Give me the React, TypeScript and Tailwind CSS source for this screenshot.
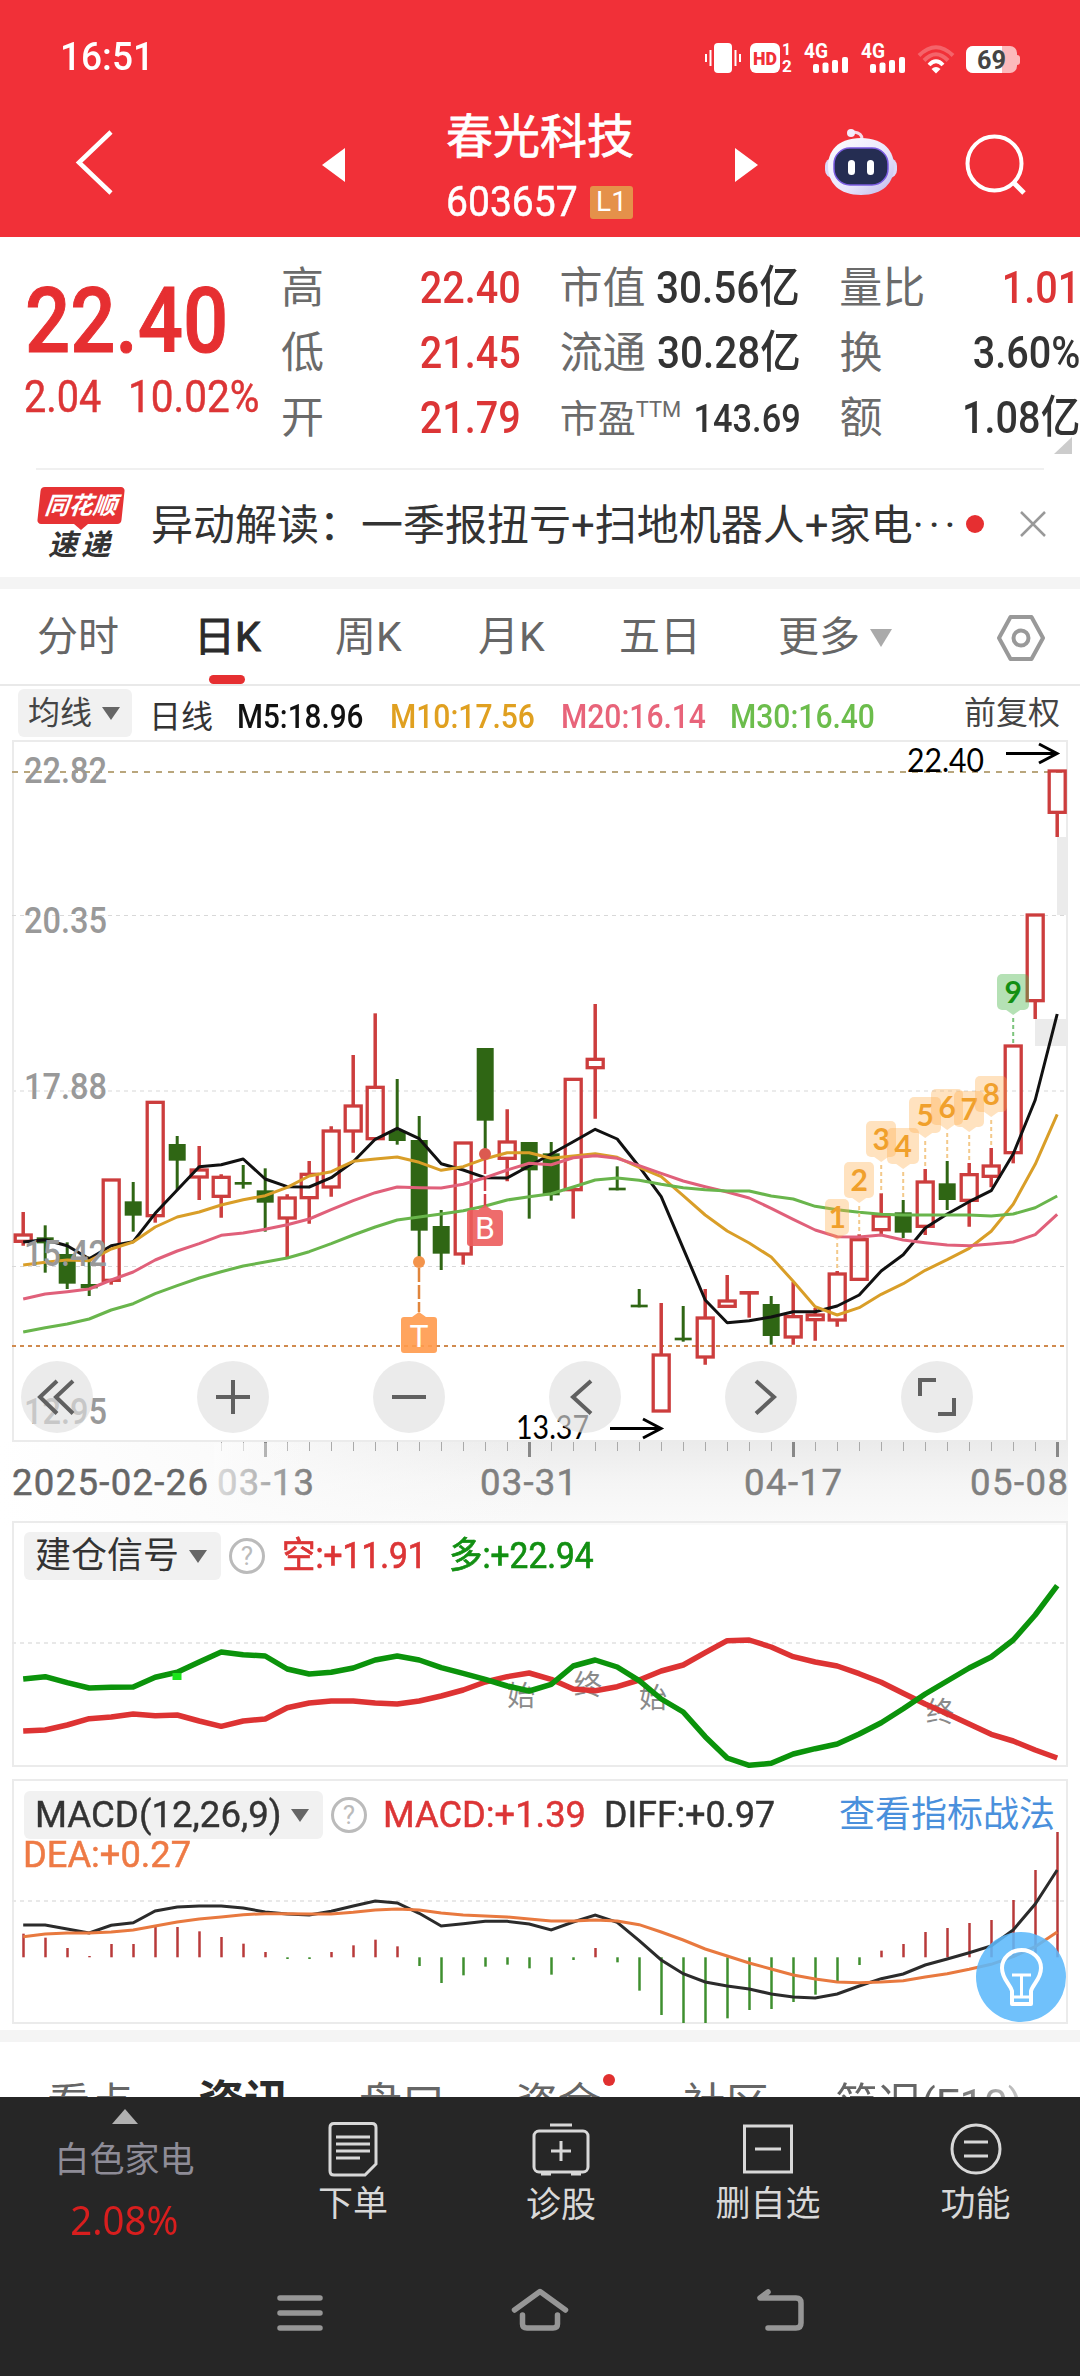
import React from 'react'

const STEP = 22
const X0 = 23.2
const px = (i: number) => X0 + i * STEP

// [high, bodyTop, bodyBottom, low, up ? 1 : 0], thirds of a pixel below y = 1080
const candles: number[][] = [
  [396, 465, 484, 497, 1], [436, 472, 490, 578, 0], [487, 522, 611, 627, 0], [530, 612, 625, 648, 0],
  [300, 300, 601, 614, 1], [306, 364, 407, 455, 0], [67, 67, 407, 428, 1], [168, 192, 242, 330, 0],
  [198, 270, 291, 360, 1], [283, 292, 349, 413, 1], [255, 306, 314, 326, 0], [265, 331, 368, 455, 0],
  [343, 354, 414, 537, 1], [243, 283, 353, 431, 1], [139, 153, 321, 350, 1], [-75, 78, 153, 218, 1],
  [-200, 22, 176, 176, 1], [-3, 153, 183, 194, 0], [108, 180, 452, 545, 0], [390, 438, 521, 570, 0],
  [189, 189, 522, 554, 1], [-96, -96, 122, 222, 0], [88, 186, 235, 304, 1], [186, 186, 271, 416, 0],
  [186, 220, 346, 362, 0], [-2, -2, 329, 416, 1], [-228, -62, -37, 116, 1], [259, 323, 331, 331, 0],
  [627, 674, 682, 682, 0], [669, 825, 993, 993, 1], [678, 773, 781, 785, 0], [627, 714, 831, 854, 1],
  [585, 663, 679, 679, 1], [638, 638, 639, 713, 1], [648, 672, 768, 794, 0], [606, 710, 771, 794, 1],
  [684, 705, 719, 782, 1], [573, 582, 720, 740, 1], [463, 479, 598, 602, 1], [340, 408, 449, 465, 1],
  [360, 397, 458, 474, 0], [267, 306, 439, 465, 1], [243, 310, 360, 390, 0], [249, 284, 361, 440, 1],
  [204, 258, 289, 322, 1], [-102, -102, 218, 250, 1], [-495, -495, -238, -183, 1], [-927, -927, -803, -729, 1],
]

const m5 = [486, 479, 497, 536, 497, 485, 400, 330, 260, 254, 237, 297, 320, 321, 293, 245, 178, 145, 176, 251, 270, 293, 294, 258, 222, 185, 148, 177, 260, 350, 505, 660, 728, 722, 711, 695, 695, 678, 645, 573, 524, 444, 402, 365, 332, 222, 60, -198]
const m10 = [555, 547, 540, 542, 507, 486, 441, 411, 396, 375, 359, 347, 322, 288, 275, 244, 237, 231, 247, 271, 260, 236, 218, 218, 235, 228, 221, 232, 262, 290, 347, 405, 453, 489, 531, 604, 680, 705, 683, 643, 611, 571, 539, 505, 454, 373, 253, 103]
const m20 = [657, 642, 635, 627, 600, 576, 540, 513, 491, 466, 459, 448, 434, 417, 389, 362, 338, 321, 323, 324, 313, 293, 270, 250, 254, 233, 227, 235, 257, 280, 303, 320, 336, 354, 385, 418, 450, 470, 471, 465, 480, 488, 495, 497, 492, 486, 464, 403]
const m30 = [756, 743, 732, 717, 690, 671, 641, 617, 594, 575, 558, 546, 534, 515, 491, 465, 441, 420, 411, 402, 392, 378, 360, 350, 341, 321, 300, 294, 301, 313, 323, 329, 333, 333, 348, 357, 379, 389, 397, 403, 405, 405, 405, 405, 408, 402, 383, 348]

const longLine = [507, 500, 518, 534, 532, 531, 502, 487, 456, 426, 434, 438, 477, 492, 487, 474, 450, 438, 450, 473, 490, 508, 528, 543, 523, 468, 450, 471, 512, 567, 606, 680, 744, 766, 760, 732, 716, 702, 672, 638, 596, 552, 513, 474, 441, 390, 315, 227]
const shortLine = [663, 660, 645, 626, 621, 612, 617, 615, 633, 649, 633, 627, 593, 579, 573, 573, 579, 582, 573, 558, 540, 516, 500, 489, 508, 537, 542, 530, 510, 483, 465, 428, 392, 390, 411, 440, 456, 468, 491, 517, 550, 582, 611, 642, 673, 693, 720, 744]

const macdBars = [491, 503, 534, 558, 522, 522, 470, 471, 484, 501, 521, 546, 567, 567, 546, 526, 509, 529, 588, 639, 616, 590, 584, 595, 614, 570, 534, 577, 662, 735, 759, 759, 745, 720, 717, 696, 674, 634, 585, 542, 522, 486, 474, 459, 450, 390, 300, 186]
const diff = [465, 465, 477, 489, 466, 458, 423, 411, 408, 408, 414, 426, 432, 435, 424, 408, 393, 399, 430, 468, 461, 454, 454, 462, 480, 456, 435, 457, 512, 570, 611, 636, 648, 657, 672, 681, 684, 672, 648, 626, 612, 585, 567, 548, 528, 480, 402, 300]
const dea = [500, 492, 489, 489, 486, 480, 468, 456, 447, 441, 434, 431, 431, 432, 432, 427, 420, 417, 420, 429, 435, 438, 441, 447, 453, 453, 450, 453, 464, 486, 510, 537, 558, 579, 597, 615, 627, 636, 638, 636, 632, 621, 611, 598, 583, 560, 530, 486]

const line = (data: number[], base: number) =>
  data.map((v, i) => `${px(i).toFixed(1)},${(base + v / 3).toFixed(1)}`).join(' ')

// label, x, width, top, candle index
const badges: [string, number, number, number, number][] = [
  ['1', 825, 24, 1199, 37], ['2', 844, 30, 1162, 38], ['3', 866, 30, 1121, 39], ['4', 887, 32, 1128, 40],
  ['5', 909, 32, 1097, 41], ['6', 931, 32, 1089, 42], ['7', 954, 30, 1091, 43], ['8', 975, 32, 1076, 44],
  ['9', 997, 32, 974, 45],
]

const priceLabels: [string, number][] = [['22.82', 783], ['20.35', 933], ['17.88', 1099], ['15.42', 1266], ['12.95', 1424]]

function StatusBar() {
  return (
    <div className="flex h-[96px] items-start justify-between pl-[60px]">
      <span className="mt-[34px] origin-left scale-x-[0.95] text-[39px] leading-[46px] font-medium">16:51</span>
      <svg className="mt-[30px] w-[380px] shrink-0" height="50" viewBox="700 30 380 50" fill="#fff">
        <rect x="714" y="43" width="18" height="30" rx="4" />
        <path d="M710.5 50v16M706 54v8M735.5 50v16M740 54v8" stroke="#fff" strokeWidth="2" />
        <rect x="750" y="43" width="30" height="30" rx="6" />
        <text x="753" y="65" fontSize="19" fontWeight="900" fill="#f13038" textLength="24" lengthAdjust="spacingAndGlyphs">HD</text>
        <text x="782" y="55" fontSize="16" fontWeight="700">1</text>
        <text x="782" y="72" fontSize="17" fontWeight="700">2</text>
        {[0, 57].map((dx) => (
          <g key={dx} transform={`translate(${dx} 0)`}>
            <text x="804" y="57.500" fontSize="20" fontWeight="700" textLength="24" lengthAdjust="spacingAndGlyphs">4G</text>
            <rect x="813" y="64" width="6" height="9" rx="2" />
            <rect x="822.5" y="62.5" width="6" height="10.5" rx="2" />
            <rect x="832" y="60" width="6" height="13" rx="2" />
            <rect x="842" y="57" width="6" height="16" rx="2" />
          </g>
        ))}
        <g fill="none" stroke="#fff" strokeWidth="4">
          <path d="M919 55.5Q936 39 953 55.5" opacity="0.25" />
          <path d="M924 60.5Q936 48 948 60.5" opacity="0.25" />
          <path d="M929 65Q936 57.500 943 65" />
        </g>
        <path d="M931.500 69Q936 65 940.500 69L936 73.500z" />
        <rect x="966" y="46" width="51" height="27" rx="7" fill="#fcb9bb" />
        <path d="M973 46h29v27h-29a7 7 0 0 1-7-7V53a7 7 0 0 1 7-7z" />
        <path d="M1017 55q3 0 3 3v4q0 3-3 3z" fill="#fcb9bb" />
        <text x="977" y="69" fontSize="25" fontWeight="700" fill="#444" textLength="29" lengthAdjust="spacingAndGlyphs">69</text>
      </svg>
    </div>
  )
}

function Robot() {
  return (
    <svg width="74" height="70" viewBox="824 128 74 70">
      <defs>
        <linearGradient id="shell" x1="0" y1="0" x2="1" y2="1">
          <stop offset="0" stopColor="#fff" />
          <stop offset="0.6" stopColor="#e8e4fb" />
          <stop offset="1" stopColor="#bcb6ea" />
        </linearGradient>
      </defs>
      <path d="M862 139q0-6-8-7" fill="none" stroke="#f6d9e6" strokeWidth="3" />
      <circle cx="851" cy="133" r="4" fill="#f4ecfb" />
      <rect x="825" y="158" width="72" height="20" rx="8" fill="#dcd8f7" />
      <path d="M861 138c24 0 33 14 33 28 0 17-11 29-33 29s-33-12-33-29c0-14 9-28 33-28z" fill="url(#shell)" />
      <rect x="834" y="148" width="54" height="37" rx="16" fill="#252d52" stroke="#7a5be0" strokeWidth="1.500" />
      <rect x="848" y="160" width="7" height="15" rx="3.500" fill="#fff" />
      <rect x="867" y="160" width="7" height="15" rx="3.500" fill="#fff" />
    </svg>
  )
}

function Header() {
  return (
    <header className="h-[237px] bg-[#f13038] text-white">
      <StatusBar />
      <div className="flex h-[141px] items-start">
        <svg className="mt-[30px] ml-[70px]" width="50" height="70" viewBox="70 126 50 70" fill="none" stroke="#fff" strokeWidth="4.500">
          <path d="M111 132L79 162.500L111 193" />
        </svg>
        <svg className="mt-[50px] ml-[200px]" width="30" height="38" viewBox="320 146 30 38" fill="#fff">
          <path d="M322 165L345 148V182z" />
        </svg>
        <div className="ml-[96px] flex w-[190px] flex-col">
          <h1 className="mt-[11px] text-[47px] leading-[60px] whitespace-nowrap [-webkit-text-stroke:0.8px]">春光科技</h1>
          <div className="mt-[10px] flex items-center">
            <span className="w-[144px] origin-left scale-x-[0.93] text-[42px] leading-[50px] [-webkit-text-stroke:0.5px]">603657</span>
            <span className="flex h-[33px] w-[43px] items-center justify-center rounded-[3px] bg-[#e5914a] text-[28px] leading-none">L1</span>
          </div>
        </div>
        <svg className="mt-[50px] ml-[96px]" width="30" height="38" viewBox="732 146 30 38" fill="#fff">
          <path d="M758 165L735 148V182z" />
        </svg>
        <div className="mt-8 ml-[62px]"><Robot /></div>
        <svg className="mt-[34px] ml-[64px]" width="68" height="68" viewBox="962 130 68 68" fill="none" stroke="#fff" strokeWidth="4">
          <circle cx="994.500" cy="163.500" r="27" />
          <path d="M1014 183L1024 193" strokeWidth="5" />
        </svg>
      </div>
    </header>
  )
}

const red = 'text-[#dc3536]'
const rows = [
  ['高', '22.40', '市值', '30.56亿', '量比', '1.01'],
  ['低', '21.45', '流通', '30.28亿', '换', '3.60%'],
  ['开', '21.79', '市盈', '143.69', '额', '1.08亿'],
]

function Quote() {
  return (
    <section className="relative flex h-[231px] pt-[18px]">
      <div className="w-[281px] pl-[26px] text-[#e62f31]">
        <div className="mt-[14px] ml-[-1px] origin-left scale-x-[0.885] text-[90px] leading-[106px] font-medium [-webkit-text-stroke:1px]">22.40</div>
        <div className={`mt-[-6px] ml-[-2px] flex text-[45px] leading-[56px] ${red} [-webkit-text-stroke:0.5px]`}>
          <span className="w-[104px] origin-left scale-x-[0.88]">2.04</span>
          <span className="origin-left scale-x-[0.9]">10.02%</span>
        </div>
      </div>
      <div className="flex w-[799px] flex-col">
        {rows.map((r, i) => (
          <div key={r[0]} className="flex h-[65px] items-center text-[43px] leading-[60px] whitespace-nowrap text-[#6b6b6b]">
            <span className="w-[120px]">{r[0]}</span>
            <span className={`w-[120px] text-right ${red}`}>
              <b className="inline-block origin-right scale-x-[0.88] text-[45px] font-medium">{r[1]}</b>
            </span>
            <span className="w-[92px] pl-[39px]">
              {i === 2 ? <span className="text-[38px]">{r[2]}<sup className="top-[-15px] text-[22px]">TTM</sup></span> : r[2]}
            </span>
            <span className="w-[188px] text-right text-[#333]">
              <b className={i === 2 ? 'inline-block origin-right scale-x-[0.88] text-[39px] font-medium' : 'inline-block origin-right scale-x-[0.9] text-[45px] font-medium'}>{r[3]}</b>
            </span>
            <span className="w-[119px] pl-[39px]">{r[4]}</span>
            <span className={i === 0 ? 'w-[161px] text-right text-[#dc3536]' : 'w-[161px] text-right text-[#333]'}>
              <b className="inline-block origin-right scale-x-[0.88] text-[45px] font-medium">{r[5]}</b>
            </span>
          </div>
        ))}
      </div>
      <svg className="absolute right-2 bottom-[14px]" width="18" height="17" fill="#ccc"><path d="M18 0V17H0z" /></svg>
    </section>
  )
}

function NewsBar() {
  return (
    <section className="flex h-[109px] flex-col">
      <div className="mx-9 h-[2px] shrink-0 bg-[#f0f0f0]" />
      <div className="flex h-[107px] items-center pl-[36px]">
        <div className="flex w-[90px] flex-col items-center font-bold italic">
          <div className="flex h-[37px] w-[84px] -skew-x-6 items-center justify-center rounded bg-[#e63234] text-[24px] leading-none whitespace-nowrap text-white">同花顺</div>
          <svg width="14" height="6" fill="#e63234"><path d="M0 0H14L7 6z" /></svg>
          <div className="text-[29px] leading-[30px] tracking-[4px] text-[#333]">速递</div>
        </div>
        <p className="mt-[3px] ml-[25px] w-[815px] text-[42px] whitespace-nowrap text-[#333]">
          异动解读：一季报扭亏+扫地机器人+家电<span className="tracking-[5px]">···</span>
        </p>
        <span className="size-[18px] shrink-0 rounded-full bg-[#e62f31]" />
        <svg className="ml-[36px] shrink-0" width="26" height="26" stroke="#999" strokeWidth="2.500"><path d="M1 1L25 25M25 1L1 25" /></svg>
      </div>
    </section>
  )
}

function PeriodTabs() {
  return (
    <nav className="flex h-[97px] items-center border-b-2 border-[#e9e9e9] pt-[3px] text-[41px] text-[#666]">
      <span className="ml-[37px] w-[157px]">分时</span>
      <span className="relative w-[141px] text-[#2b2b2b] [-webkit-text-stroke:1px]">
        日K
        <i className="absolute top-[68px] left-[15px] h-[9px] w-9 rounded-full bg-[#e62f31]" />
      </span>
      <span className="w-[143px]">周K</span>
      <span className="w-[141px]">月K</span>
      <span className="w-[159px]">五日</span>
      <span className="w-[91px]">更多</span>
      <svg width="24" height="20" fill="#aaa"><path d="M1 1H23L12 19z" /></svg>
      <svg className="ml-[102px]" width="52" height="50" viewBox="0 0 52 50" fill="none" stroke="#999" strokeWidth="4">
        <path d="M15.500 4H36.500L48 25L36.500 46H15.500L4 25z" strokeLinejoin="round" />
        <circle cx="26" cy="25" r="7.500" />
      </svg>
    </nav>
  )
}

function Caret() {
  return <svg width="18" height="13" fill="#666"><path d="M0 0H18L9 13z" /></svg>
}

function Help() {
  return (
    <span className="ml-2 flex size-9 shrink-0 items-center justify-center rounded-full border-[3px] border-[#bbb] text-[26px] leading-none text-[#bbb]">?</span>
  )
}

function AverageBar() {
  return (
    <div className="flex h-[54px] items-start pl-[18px] text-[33px] whitespace-nowrap">
      <div className="mt-[3px] flex h-12 w-[114px] items-center justify-between rounded-md bg-[#f1f1f1] pr-3 pl-[10px] text-[32px] text-[#444]">
        均线<Caret />
      </div>
      <div className="mt-[7px] flex h-12 items-center">
        <span className="ml-[17px] w-[88px] text-[32px] text-[#333]">日线</span>
        <span className="w-[153px] origin-left scale-x-[0.9] font-medium text-[#111]">M5:18.96</span>
        <span className="w-[171px] origin-left scale-x-[0.91] font-medium text-[#e0a020]">M10:17.56</span>
        <span className="w-[169px] origin-left scale-x-[0.91] font-medium text-[#e8647a]">M20:16.14</span>
        <span className="w-[234px] origin-left scale-x-[0.91] font-medium text-[#6cbd4c]">M30:16.40</span>
      </div>
      <span className="mt-[3px] text-[32px] leading-[48px] text-[#444]">前复权</span>
    </div>
  )
}

function KLine() {
  const y = (v: number) => 1080 + v / 3
  return (
    <svg width="1080" height="785" viewBox="0 740 1080 785" fill="none">
      <defs>
        <linearGradient id="axisY" x2="0" y2="1"><stop offset="0" stopColor="#ebebeb" /><stop offset="0.5" stopColor="#f5f5f5" /><stop offset="1" stopColor="#fafafa" /></linearGradient>
        <linearGradient id="axisFade"><stop offset="0" stopColor="#fff" /><stop offset="0.4" stopColor="#fcfcfc" stopOpacity="0.9" /><stop offset="1" stopColor="#fafafa" stopOpacity="0" /></linearGradient>
        <linearGradient id="fade"><stop offset="0" stopColor="#fcfcfc" stopOpacity="0.75" /><stop offset="0.4" stopColor="#fafafa" stopOpacity="0.5" /><stop offset="1" stopColor="#fafafa" stopOpacity="0" /></linearGradient>
      </defs>
      <rect x="0" y="1442" width="1068" height="83" fill="url(#axisY)" />
      <rect x="0" y="1442" width="560" height="83" fill="url(#axisFade)" />
      <path d="M13 1441V741H1067V1441z" stroke="#ebebeb" strokeWidth="2" />

      <path d="M12 772H1066" stroke="#b9a67c" strokeWidth="2" strokeDasharray="6 6" />
      <path d="M12 915.500H1066M12 1266.500H1066" stroke="#d8d8d8" strokeWidth="1" strokeDasharray="4 4" />
      <path d="M12 1091H1066" stroke="#ebebeb" strokeWidth="2" strokeDasharray="4 4" />
      <path d="M12 1346H1066" stroke="#d08a4e" strokeWidth="2" strokeDasharray="4 4" />
      <path d="M1057 837H1068V915H1057zM1035 1019H1068V1046H1035z" fill="#ebebeb" />

      {candles.map(([h, t, b, l, up], i) => {
        const x = px(i)
        return up ? (
          <g key={i} stroke="#cc3d3d">
            <path d={`M${x} ${y(h)}V${y(t)}M${x} ${y(b)}V${y(l)}`} strokeWidth="3.500" />
            <rect x={x - 8} y={y(t)} width="16" height={y(b) - y(t)} strokeWidth="3.300" />
          </g>
        ) : (
          <g key={i} fill="#2f6614">
            <rect x={x - 1.5} y={y(h)} width="3" height={y(l) - y(h)} />
            <rect x={x - 8.5} y={y(t)} width="17" height={y(b) - y(t)} />
          </g>
        )
      })}

      <g strokeWidth="3" strokeLinejoin="round">
        <polyline points={line(m5, 1080)} stroke="#111" />
        <polyline points={line(m10, 1080)} stroke="#d99e28" />
        <polyline points={line(m20, 1080)} stroke="#e0607a" />
        <polyline points={line(m30, 1080)} stroke="#69b54c" />
      </g>

      <g fontFamily="Roboto" fontSize="36.500" fontWeight="500" fill="#999">
        {priceLabels.map(([t, ly]) => (
          <text key={t} x="24" y={ly} textLength="83" lengthAdjust="spacingAndGlyphs">{t}</text>
        ))}
      </g>

      <circle cx="419" cy="1262" r="6" fill="#f3944c" />
      <path d="M419 1268V1312" stroke="#e0853c" strokeWidth="2.500" strokeDasharray="14 3" />
      <path d="M404 1317H412L419 1312L426 1317H434Q437 1317 437 1320V1350Q437 1353 434 1353H404Q401 1353 401 1350V1320Q401 1317 404 1317z" fill="#ff9a4c" opacity="0.9" />
      <text x="419" y="1347" fontSize="32" fontFamily="Roboto" fill="#fff" textAnchor="middle">T</text>
      <circle cx="485" cy="1154" r="6" fill="#dc5a50" />
      <path d="M485 1160V1206" stroke="#d23c46" strokeWidth="2.500" strokeDasharray="14 3" />
      <path d="M470 1210H478L485 1205L492 1210H500Q503 1210 503 1213V1243Q503 1246 500 1246H470Q467 1246 467 1243V1213Q467 1210 470 1210z" fill="#ec5c5c" opacity="0.9" />
      <text x="485" y="1239" fontSize="32" fontFamily="Roboto" fill="#fff" textAnchor="middle">B</text>

      {badges.map(([t, bx, w, by, i]) => {
        const green = t === '9'
        return (
          <g key={t}>
            <path d={`M${px(i)} ${by + 44}V${y(candles[i][0])}`} stroke={green ? '#7cc47c' : '#f3c98a'} strokeWidth="2" strokeDasharray="4 3" />
            <rect x={bx} y={by} width={w} height="36" rx="5" fill={green ? '#4fb84f' : '#ffb04e'} opacity={green ? 0.42 : 0.36} />
            <path d={`M${px(i) - 7} ${by + 36}h14l-7 5z`} fill={green ? '#4fb84f' : '#ffb04e'} opacity={green ? 0.42 : 0.36} />
            <text x={px(i)} y={by + 28.5} fontFamily="Lato" fontWeight="700" fontSize="30" fill={green ? '#128f12' : '#f0a02c'} textAnchor="middle">{t}</text>
          </g>
        )
      })}

      <g fontFamily="Lato" fontSize="32" fill="#000">
        <text x="907" y="772" textLength="77" lengthAdjust="spacingAndGlyphs">22.40</text>
        <text x="516" y="1439" textLength="73" lengthAdjust="spacingAndGlyphs">13.37</text>
      </g>
      <path d="M1006 753.500H1056M1039 744L1057 753.500L1039 763M610 1428.500H660M643 1419L661 1428.500L643 1438" stroke="#000" strokeWidth="3" />

      {candles.map((_, i) => {
        if (i < 9) return null
        const major = (i + 1) % 12 === 0
        return <path key={i} d={`M${px(i) + 0.3} 1442V${major ? 1457 : 1451}`} stroke={major ? '#888' : '#aaa'} strokeWidth={major ? 3 : 1} />
      })}
      <g fontFamily="Roboto" fontSize="36.500" fill="#808080" stroke="#808080" strokeWidth="0.500">
        <text x="217" y="1495" textLength="97">03-13</text>
        <text x="480" y="1495" textLength="97">03-31</text>
        <text x="744" y="1495" textLength="98">04-17</text>
        <text x="970" y="1495" textLength="98">05-08</text>
        <rect x="214" y="1443" width="96" height="60" fill="url(#fade)" stroke="none" />
        <text x="12" y="1495" textLength="196" fill="#666" stroke="#666">2025-02-26</text>
      </g>
    </svg>
  )
}

const controls = [
  'M16 -16L-1 0L16 16.500M0 -16L-17 0L0 16.500',
  'M-17 0H17M0 -17V17',
  'M-17 0H17',
  'M6 -16L-12 0L6 16.500',
  'M-5 -16L13 0L-5 16.500',
  'M-17 -1V-17H-1M1 17H17V1',
]

function ChartPanel() {
  return (
    <section className="relative h-[781px]">
      <KLine />
      <div className="absolute top-[621px] left-[21px] flex gap-[104px]">
        {controls.map((d) => (
          <button key={d} className="flex size-[72px] items-center justify-center rounded-full bg-[#e0e0e0]/65">
            <svg width="40" height="40" viewBox="-20 -20 40 40" fill="none" stroke="#606060" strokeWidth="4"><path d={d} /></svg>
          </button>
        ))}
      </div>
    </section>
  )
}

function SignalPanel() {
  return (
    <section className="relative mx-3 h-[246px] border-2 border-[#ebebeb]">
      <div className="relative flex items-center pt-[9px] pl-[10px] text-[36px] leading-[48px] whitespace-nowrap">
        <div className="flex h-12 w-[197px] items-center justify-between rounded-md bg-[#f1f1f1] pr-[14px] pl-[11px] text-[#333]">
          <span>建仓信号</span><Caret />
        </div>
        <Help />
        <span className="ml-[17px] w-[167px] origin-left scale-x-[0.93] text-[#dc3536] [-webkit-text-stroke:0.7px]">空:+11.91</span>
        <span className="origin-left scale-x-[0.93] text-[#128f12] [-webkit-text-stroke:0.7px]">多:+22.94</span>
      </div>
      <svg className="absolute -top-[3px] -left-[14px]" width="1080" height="250" viewBox="0 1520 1080 250" fill="none">
        <path d="M12 1643H1066" stroke="#e8e8e8" strokeWidth="2" strokeDasharray="4 4" />
        <g fontFamily="'Noto Sans CJK SC', sans-serif" fontSize="28" fill="#8a8a8a">
          <text x="507" y="1706">始</text>
          <text x="574" y="1695">终</text>
          <text x="639" y="1708">始</text>
          <text x="926" y="1722">终</text>
        </g>
        <g strokeWidth="5.500" strokeLinejoin="round">
          <polyline points={line(shortLine, 1510)} stroke="#dd3333" />
          <polyline points={line(longLine, 1510)} stroke="#0b930b" />
        </g>
        <rect x="172.500" y="1673" width="9" height="7" fill="#1be51b" />
      </svg>
    </section>
  )
}

function MacdPanel() {
  return (
    <section className="relative mx-3 mt-3 h-[245px] border-2 border-[#ebebeb]">
      <div className="flex items-center pt-[10px] pl-[10px] text-[37px] leading-[48px] whitespace-nowrap">
        <div className="flex h-12 w-[299px] items-center justify-between rounded-md bg-[#f1f1f1] pr-[14px] pl-[11px] text-[#333]">
          <span className="w-[240px] origin-left scale-x-[0.99] [-webkit-text-stroke:0.4px]">MACD(12,26,9)</span><Caret />
        </div>
        <Help />
        <span className="ml-[16px] w-[221px] origin-left scale-x-[0.98] text-[#dc3536] [-webkit-text-stroke:0.5px]">MACD:+1.39</span>
        <span className="w-[235px] origin-left scale-x-[0.965] text-[#333] [-webkit-text-stroke:0.5px]">DIFF:+0.97</span>
        <a className="text-[36px] text-[#4a90dc]">查看指标战法</a>
      </div>
      <div className="mt-[-7px] ml-[9px] w-60 origin-left scale-x-[0.98] text-[37px] leading-[46px] text-[#ee7a45] [-webkit-text-stroke:0.5px]">DEA:+0.27</div>
      <svg className="absolute -top-[3px] -left-[14px]" width="1080" height="250" viewBox="0 1778 1080 250" fill="none">
        <path d="M12 1901H1066" stroke="#e8e8e8" strokeWidth="2" strokeDasharray="4 4" />
        {macdBars.map((v, i) => (
          <path key={i} d={`M${px(i) + 0.3} 1957.300V${1770 + v / 3}`} stroke={v < 562 ? '#b83a3a' : '#3f8f2f'} strokeWidth="2.500" />
        ))}
        <polyline points={line(diff, 1770)} stroke="#2b2b2b" strokeWidth="3" />
        <polyline points={line(dea, 1770)} stroke="#e8793f" strokeWidth="3" />
        <circle cx="1021" cy="1977" r="45" fill="#5cb8fb" opacity="0.88" />
        <g stroke="#fff" strokeWidth="4">
          <path d="M1012 1991C1010 1984 1002 1979 1002 1968a19.500 18 0 0 1 39 0C1041 1979 1033 1984 1031 1991V2004H1012z" strokeLinejoin="round" />
          <path d="M1012 1975H1031M1021.500 1975V1996M1012 1997H1031" strokeWidth="3" />
        </g>
      </svg>
    </section>
  )
}

function InfoTabs() {
  return (
    <nav className="flex h-[55px] items-start overflow-hidden text-[43px] leading-[60px] whitespace-nowrap text-[#666]">
      <span className="mt-[32px] ml-[47px] w-[151px]">看点</span>
      <span className="mt-[30px] w-[161px] text-[46px] font-bold text-[#2b2b2b]">资讯</span>
      <span className="mt-[32px] w-[156px]">盘口</span>
      <span className="relative mt-[32px] w-[168px]">
        资金
        <i className="absolute top-0 left-[88px] size-3 rounded-full bg-[#e0302f]" />
      </span>
      <span className="mt-[32px] w-[152px]">社区</span>
      <span className="mt-[32px] bg-gradient-to-r from-[#666] from-60% to-[#ccc] bg-clip-text text-transparent">简况(F10)</span>
    </nav>
  )
}

function BottomBar() {
  return (
    <footer className="h-[279px] bg-[#262626] text-[#d8d8d8]">
      <div className="flex h-[175px] text-center text-[35px] whitespace-nowrap">
        <div className="flex w-[249px] flex-col items-center pt-[12px]">
          <svg width="26" height="15" fill="#b0b0b0"><path d="M13 0L26 15H0z" /></svg>
          <span className="mt-[12px] leading-[50px] text-[#8e8c97]">白色家电</span>
          <span className="mt-[9px] origin-center scale-x-[0.96] font-['Noto_Sans','Noto_Sans_CJK_SC',sans-serif] text-[40px] leading-[50px] text-[#d81e1e]">2.08%</span>
        </div>
        <div className="flex w-[208px] flex-col items-center pt-6">
          <svg width="52" height="56" viewBox="0 0 52 56" fill="none" stroke="currentColor" strokeWidth="3">
            <path d="M7 2.500H45Q49 2.500 49 6.500V43L38 54H7Q3 54 3 50V6.500Q3 2.500 7 2.500z" />
            <path d="M9 16H43M9 23H43M9 30H43M9 37H33" />
          </svg>
          <span className="mt-[3px] leading-[50px]">下单</span>
        </div>
        <div className="flex w-[208px] flex-col items-center pt-6">
          <svg width="60" height="56" viewBox="0 0 60 56" fill="none" stroke="currentColor" strokeWidth="3">
            <rect x="3" y="10" width="54" height="41" rx="5" />
            <path d="M19 4H41M30 20V40M20 30H40M10 53H20M40 53H50" />
          </svg>
          <span className="mt-[4px] leading-[50px]">诊股</span>
        </div>
        <div className="flex w-[206px] flex-col items-center pt-6">
          <svg width="52" height="56" viewBox="0 0 52 56" fill="none" stroke="currentColor" strokeWidth="3">
            <path d="M2.500 5H49.500V51H2.500zM13 28H39" />
          </svg>
          <span className="mt-[3px] leading-[50px]">删自选</span>
        </div>
        <div className="flex w-[209px] flex-col items-center pt-6">
          <svg width="54" height="56" viewBox="0 0 54 56" fill="none" stroke="currentColor" strokeWidth="3">
            <circle cx="27" cy="28" r="24" />
            <path d="M15 21H39M15 35H39" />
          </svg>
          <span className="mt-[3px] leading-[50px]">功能</span>
        </div>
      </div>
      <svg width="1080" height="104" viewBox="0 2272 1080 104" fill="none" stroke="#969696" strokeWidth="5.500" strokeLinecap="round" strokeLinejoin="round">
        <path d="M280 2298H320M280 2313H320M280 2328H320" />
        <path d="M514.500 2310L540 2291.500L565.500 2310M522.500 2315V2324Q522.500 2328 527 2328H553Q557.500 2328 557.500 2324V2315" />
        <path d="M768 2292L760 2298H796Q801 2298 801 2303V2323Q801 2328 796 2328H768" />
      </svg>
    </footer>
  )
}

export default function App() {
  return (
    <div className="h-[2376px] w-[1080px] overflow-hidden bg-white font-['Roboto','Noto_Sans_CJK_SC',sans-serif]">
      <Header />
      <Quote />
      <NewsBar />
      <div className="h-3 bg-[#f4f4f4]" />
      <PeriodTabs />
      <AverageBar />
      <ChartPanel />
      <SignalPanel />
      <MacdPanel />
      <div className="mt-[6px] h-3 bg-[#f4f4f4]" />
      <InfoTabs />
      <BottomBar />
    </div>
  )
}
